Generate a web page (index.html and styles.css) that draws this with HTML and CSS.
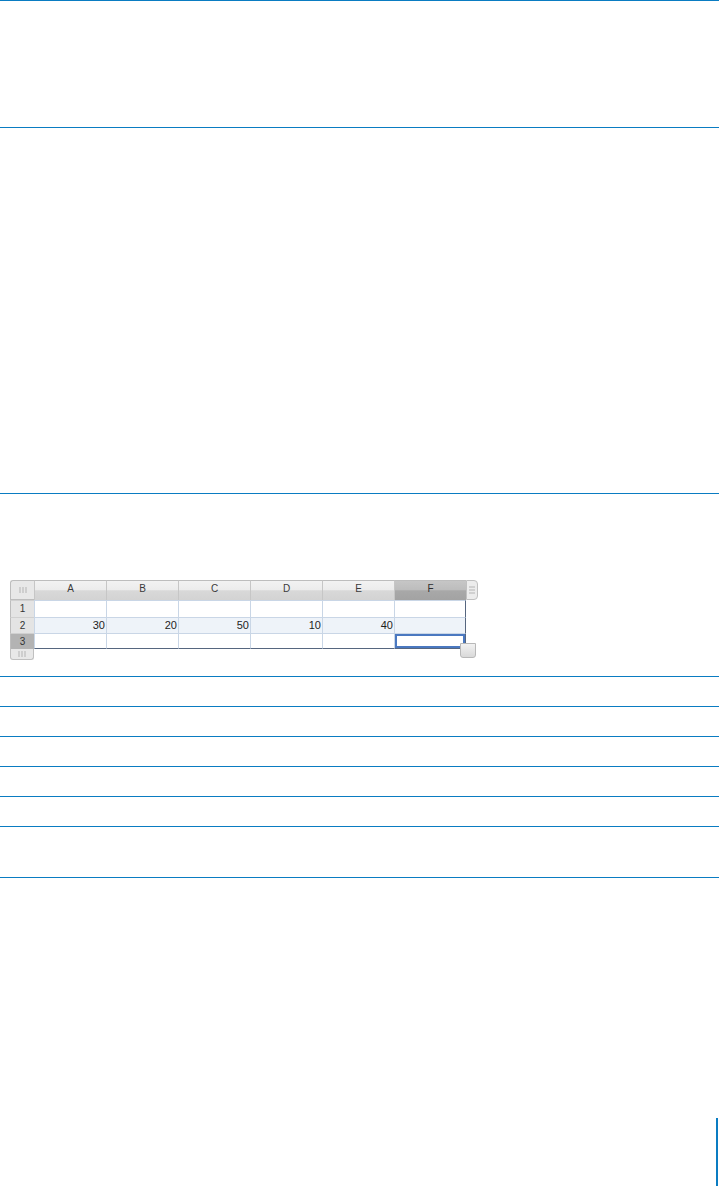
FILE: index.html
```html
<!DOCTYPE html>
<html>
<head>
<meta charset="utf-8">
<link rel="stylesheet" href="styles.css">
</head>
<body>
<div class="page">
  <div class="rule"></div>
  <div class="gap g1"></div>
  <div class="rule"></div>
  <div class="gap g2"></div>
  <div class="rule"></div>
  <div class="figure">
    <div class="sheet">
      <div class="corner grip"></div>
      <div class="colhead">A</div>
      <div class="colhead">B</div>
      <div class="colhead">C</div>
      <div class="colhead">D</div>
      <div class="colhead">E</div>
      <div class="colhead sel">F</div>
      <div class="tab grip"></div>

      <div class="rowhead">1</div>
      <div class="cell"></div><div class="cell"></div><div class="cell"></div><div class="cell"></div><div class="cell"></div><div class="cell last"></div>
      <div class="none"></div>

      <div class="rowhead">2</div>
      <div class="cell alt">30</div><div class="cell alt">20</div><div class="cell alt">50</div><div class="cell alt">10</div><div class="cell alt">40</div><div class="cell alt last"></div>
      <div class="none"></div>

      <div class="rowhead sel">3</div>
      <div class="cell bottom"></div><div class="cell bottom"></div><div class="cell bottom"></div><div class="cell bottom"></div><div class="cell bottom"></div><div class="cell bottom last active"></div>
      <div class="none"></div>

      <div class="foot grip"></div>
      <div class="resize"></div>
    </div>
  </div>
  <div class="rule"></div>
  <div class="gap row"></div>
  <div class="rule"></div>
  <div class="gap row"></div>
  <div class="rule"></div>
  <div class="gap row"></div>
  <div class="rule"></div>
  <div class="gap row"></div>
  <div class="rule"></div>
  <div class="gap row"></div>
  <div class="rule"></div>
  <div class="gap g3"></div>
  <div class="rule"></div>
  <div class="gap g4"></div>
  <div class="margin-bar"></div>
</div>
</body>
</html>
```
FILE: styles.css
```css
html, body {
  margin: 0;
  padding: 0;
  background: #ffffff;
}
body {
  font-family: "Liberation Sans", Arial, sans-serif;
}
.page {
  width: 719px;
  display: flex;
  flex-direction: column;
}
.rule {
  height: 1px;
  background: #0a7cc2;
}
.gap.g1 { height: 126px; }
.gap.g2 { height: 365px; }
.gap.row { height: 29px; }
.gap.g3 { height: 50px; }
.gap.g4 { height: 240px; }
.figure {
  height: 182px;
  padding: 86px 0 0 10px;
  box-sizing: border-box;
}
.sheet {
  position: relative;
  display: grid;
  grid-template-columns: 24px repeat(6, 72px) 12px;
  grid-template-rows: 20px 17px 16px 16px 11px;
  width: 468px;
}
.grip {
  position: relative;
  background-color: #e6e6e6;
}
.grip::after {
  content: "";
  position: absolute;
  left: 50%;
  top: 50%;
  width: 9px;
  height: 6px;
  transform: translate(-50%, -50%);
  background-image: radial-gradient(circle, #b4b4b4 0.6px, transparent 0.9px);
  background-size: 3px 2px;
}
.tab.grip::after {
  width: 6px;
  height: 9px;
  background-size: 2px 3px;
}
.corner {
  border: 1px solid #bdbdbd;
  border-right: none;
  border-radius: 3px 0 0 0;
  background-color: #e8e8e8;
}
.colhead {
  border-top: 1px solid #bdbdbd;
  border-left: 1px solid #c6c6c6;
  background: linear-gradient(to bottom, #f2f2f2 0%, #ececec 45%, #d8d8d8 52%, #d3d3d3 100%);
  font-size: 10px;
  color: #3a3a3a;
  text-align: center;
  line-height: 16px;
}
.colhead.sel {
  background: linear-gradient(to bottom, #c6c6c6 0%, #bdbdbd 45%, #a8a8a8 52%, #a3a3a3 100%);
  color: #2e2e2e;
}
.tab {
  border: 1px solid #c0c0c0;
  border-radius: 0 4px 4px 0;
  background-color: #ececec;
}
.rowhead {
  border-left: 1px solid #bdbdbd;
  border-top: 1px solid #d0d0d0;
  background: #e4e4e4;
  font-size: 10px;
  color: #333;
  text-align: center;
  line-height: 15px;
}
.rowhead.sel {
  background: #b3b3b3;
}
.cell {
  border-top: 1px solid #c9d6e6;
  border-left: 1px solid #c9d6e6;
  background: #ffffff;
  font-size: 11px;
  color: #1e1e1e;
  text-align: right;
  padding-right: 1px;
  line-height: 15px;
}
.cell.alt {
  background: #eef3f9;
}
.cell.last {
  border-right: 1px solid #56667f;
}
.cell.bottom {
  border-bottom: 1px solid #56667f;
}
.cell.active {
  box-shadow: inset 0 0 0 2px #4a78c0;
}
.none {
  background: transparent;
}
.foot {
  border: 1px solid #c0c0c0;
  border-top: none;
  border-radius: 0 0 3px 3px;
  background-color: #e8e8e8;
}
.resize {
  position: absolute;
  left: 450px;
  top: 63px;
  width: 14px;
  height: 13px;
  border: 1px solid #b8b8b8;
  border-radius: 0 0 3px 3px;
  background: linear-gradient(to bottom, #f2f2f2, #d9d9d9);
}
.margin-bar {
  align-self: flex-end;
  width: 2px;
  height: 68px;
  margin-right: 1px;
  background: #0a7cc2;
}
```
